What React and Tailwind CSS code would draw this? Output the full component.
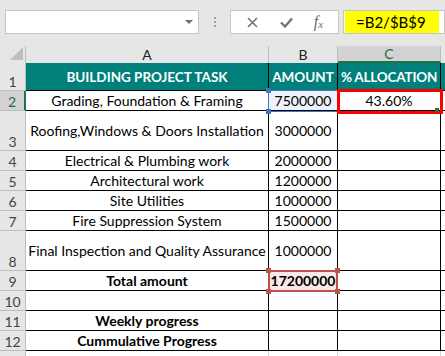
import React from "react";

const rows = [
  { n: "2", h: "h-[20px]", a: "Grading, Foundation & Framing", b: "7500000", c: "43.60%" },
  { n: "3", h: "h-[40px]", a: "Roofing,Windows & Doors Installation", b: "3000000" },
  { n: "4", h: "h-[20px]", a: "Electrical & Plumbing work", b: "2000000" },
  { n: "5", h: "h-[20px]", a: "Architectural work", b: "1200000" },
  { n: "6", h: "h-[20px]", a: "Site Utilities", b: "1000000" },
  { n: "7", h: "h-[20px]", a: "Fire Suppression System", b: "1500000" },
  { n: "8", h: "h-[40px]", a: "Final Inspection and Quality Assurance", b: "1000000" },
  { n: "9", h: "h-[20px]", a: "Total amount", b: "17200000", bold: true },
  { n: "10", h: "h-[20px]", a: "" },
  { n: "11", h: "h-[20px]", a: "Weekly progress", bold: true },
  { n: "12", h: "h-[20px]", a: "Cummulative Progress", bold: true },
];

function Handle({ cls }) {
  return <div className={"absolute w-[5px] h-[5px] " + cls} />;
}

export default function App() {
  return (
    <div className="relative w-[445px] h-[356px] overflow-hidden bg-[#e6e6e6] font-['Lato',sans-serif] text-[14px] text-black">
      {/* Formula bar */}
      <div className="flex h-[46px] pt-[10px] pl-[5px]">
        <div className="relative w-[194px] h-[24px] bg-white border border-[#c6c6c6]">
          <div className="absolute right-[5px] top-[9px] w-0 h-0 border-l-[4px] border-r-[4px] border-t-[4px] border-l-transparent border-r-transparent border-t-[#6f6f6f]" />
        </div>
        <div className="w-[31px] h-[24px] flex flex-col items-center justify-center gap-[2px]">
          <div className="w-[2px] h-[2px] bg-[#a0a0a0]" />
          <div className="w-[2px] h-[2px] bg-[#a0a0a0]" />
          <div className="w-[2px] h-[2px] bg-[#a0a0a0]" />
        </div>
        <div className="w-[109px] h-[24px] bg-white border border-[#c6c6c6] flex items-center">
          <div className="w-[40px] flex justify-center pl-[3px]">
            <svg width="11" height="11" viewBox="0 0 11 11">
              <path d="M1 1 L10 10 M10 1 L1 10" stroke="#747474" strokeWidth="1.6" />
            </svg>
          </div>
          <div className="w-[30px] flex justify-center">
            <svg width="13" height="11" viewBox="0 0 13 11">
              <path d="M1 5.5 L5 9.5 L12 1.5" stroke="#747474" strokeWidth="2.4" fill="none" />
            </svg>
          </div>
          <div className="flex-1 flex justify-center pr-[2px] font-['Liberation_Serif',serif] italic text-[#6b6b6b] text-[16px] leading-none">
            <span>f</span>
            <span className="text-[11px] mt-[5px]">x</span>
          </div>
        </div>
        <div className="ml-[4px] flex-1 h-[24px] bg-white border border-[#c6c6c6] pl-[1px]">
          <div className="w-[94px] h-[22px] bg-[#ffff00] pl-[11px] flex items-center text-[15px]">=B2/$B$9</div>
        </div>
      </div>

      {/* Column headers */}
      <div className="flex h-[17px] text-[14px] text-[#222]">
        <div className="relative w-[26px] border-r border-[#bdbdbd]">
          <svg className="absolute left-[10px] top-[1px]" width="13" height="13" viewBox="0 0 13 13">
            <path d="M13 0 L13 13 L0 13 Z" fill="#bfbfbf" />
          </svg>
        </div>
        <div className="w-[243px] border-r border-[#bdbdbd] flex items-center justify-center leading-none">A</div>
        <div className="w-[69px] border-r border-[#bdbdbd] flex items-center justify-center leading-none">B</div>
        <div className="w-[103px] bg-[#d2d2d2] border-r border-[#bdbdbd] border-b-2 border-b-[#217346] flex items-center justify-center leading-none text-[#1e6b45]">C</div>
        <div className="flex-1" />
      </div>

      {/* Row 1 */}
      <div className="flex h-[28px] text-[13.5px]">
        <div className="w-[26px] border-r border-b border-[#bdbdbd] flex items-end justify-center pb-[1px] text-[14px] text-[#444] leading-none">1</div>
        <div className="w-[243px] bg-[#007f7b] border-r border-b border-black flex items-center justify-center pt-[2px] text-white font-bold">BUILDING PROJECT TASK</div>
        <div className="w-[69px] bg-[#007f7b] border-r border-b border-black flex items-center justify-center pt-[2px] text-white font-bold">AMOUNT</div>
        <div className="w-[103px] bg-[#007f7b] border-r border-b border-black flex items-center justify-center pt-[2px] text-white font-bold whitespace-nowrap tracking-[-0.2px]">% ALLOCATION</div>
        <div className="flex-1 bg-[#007f7b] border-b border-black" />
      </div>

      {rows.map((r) => (
        <div key={r.n} className={"flex bg-white " + r.h}>
          <div
            className={
              "w-[26px] border-b border-[#bdbdbd] flex items-end justify-center pb-[1px] leading-none " +
              (r.n === "2"
                ? "bg-[#d2d2d2] border-r-2 border-r-[#217346] text-[#1e6b45]"
                : "bg-[#e6e6e6] border-r border-r-[#bdbdbd] text-[#444]")
            }
          >
            {r.n}
          </div>
          <div className={"w-[243px] border-r border-b border-black flex items-center justify-center whitespace-nowrap " + (r.bold ? "font-bold" : "")}>
            {r.a}
          </div>
          <div
            className={
              "w-[69px] border-r border-b border-black flex items-center justify-center " +
              (r.bold ? "font-bold " : "") +
              (r.n === "2" ? "bg-[#eef2fa] " : "") +
              (r.n === "9" ? "bg-[#f9e8e8] " : "")
            }
          >
            {r.b || ""}
          </div>
          <div className="w-[103px] border-r border-b border-black flex items-center justify-center">{r.c || ""}</div>
          <div className="flex-1 border-b border-black" />
        </div>
      ))}

      {/* Row 13 */}
      <div className="flex h-[5px] bg-white">
        <div className="w-[26px] bg-[#e6e6e6] border-r border-[#bdbdbd]" />
        <div className="w-[243px] border-r border-[#d4d4d4]" />
        <div className="w-[69px] border-r border-[#d4d4d4]" />
        <div className="w-[103px] border-r border-[#d4d4d4]" />
        <div className="flex-1" />
      </div>

      {/* B2 reference highlight */}
      <div className="absolute left-[268px] top-[90px] w-[70px] h-[22px] border-[1.5px] border-[#4472c4]" />
      <Handle cls="left-[266px] top-[88px] bg-[#4472c4]" />
      <Handle cls="left-[266px] top-[109px] bg-[#4472c4]" />

      {/* C2 red annotation */}
      <div className="absolute left-[337px] top-[89px] w-[106px] h-[25px] border-[3px] border-[#ff0000]" />
      <div className="absolute left-[435px] top-[108px] w-[4px] h-[4px] bg-[#217346]" />

      {/* B9 reference highlight */}
      <div className="absolute left-[268px] top-[270px] w-[70px] h-[22px] border-2 border-[#c0504d]" />
      <Handle cls="left-[266px] top-[268px] bg-[#c0504d]" />
      <Handle cls="left-[335px] top-[268px] bg-[#c0504d]" />
      <Handle cls="left-[266px] top-[289px] bg-[#c0504d]" />
      <Handle cls="left-[335px] top-[289px] bg-[#c0504d]" />
    </div>
  );
}
